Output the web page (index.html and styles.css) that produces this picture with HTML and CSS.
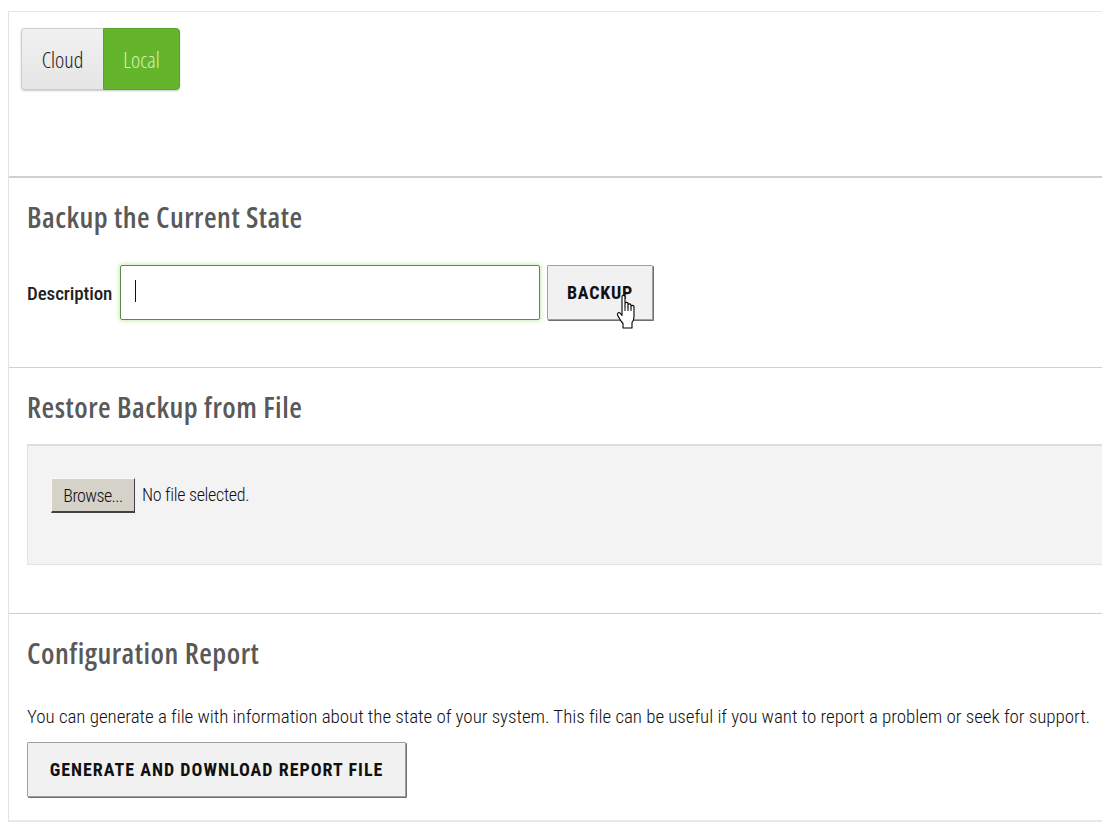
FILE: index.html
```html
<!DOCTYPE html>
<html>
<head>
<meta charset="utf-8">
<link rel="stylesheet" href="styles.css">
</head>
<body>
<div class="page">
  <section class="sec sec-toggle">
    <div class="toggle">
      <span class="tbtn tbtn-off">Cloud</span>
      <span class="tbtn tbtn-on">Local</span>
    </div>
  </section>
  <section class="sec sec-backup">
    <h2 class="title">Backup the Current State</h2>
    <div class="row">
      <label class="label">Description</label>
      <div class="input"><span class="caret"></span></div>
      <div class="btn-wrap">
        <span class="btn btn-backup">BACKUP</span>
        <svg class="hand" width="22" height="36" viewBox="0 0 22 36">
          <path d="M6 2.5 C6 1 9 1 9 2.5 L9 12 L9 9.5 C9 8 12 8 12 9.5 L12 13 L12 11 C12 9.5 15 9.5 15 11 L15 14 L15 12.5 C15 11 18 11 18 12.5 L18 22.5 C18 25.5 17 27.5 16 28.5 L16 34 L7 34 L7 29.5 C5 27.5 3 24 1.5 21 C0.8 19.5 2.5 18 4 19 L6 21.5 Z" fill="#fff" stroke="#000" stroke-width="1.1" stroke-linejoin="round"/>
          <path d="M9 12 L9 17 M12 13 L12 17 M15 14 L15 17" stroke="#000" stroke-width="1"/>
        </svg>
      </div>
    </div>
  </section>
  <section class="sec sec-restore">
    <h2 class="title">Restore Backup from File</h2>
    <div class="filebox">
      <span class="browse">Browse...</span>
      <span class="nofile">No file selected.</span>
    </div>
  </section>
  <section class="sec sec-report">
    <h2 class="title">Configuration Report</h2>
    <p class="desc">You can generate a file with information about the state of your system. This file can be useful if you want to report a problem or seek for support.</p>
    <span class="btn btn-report">GENERATE AND DOWNLOAD REPORT FILE</span>
  </section>
</div>
</body>
</html>
```
FILE: styles.css
```css
html, body {
  margin: 0;
  padding: 0;
  background: #fff;
}
body {
  padding: 11px 0 0 8px;
  font-family: "Roboto", sans-serif;
  font-stretch: condensed;
  color: #222;
}
.page {
  width: 1094px;
  box-sizing: border-box;
  border-left: 1px solid #e2e2e2;
  border-top: 1px solid #e6e6e6;
  border-bottom: 2px solid #e8e8e8;
}
.sec {
  box-sizing: border-box;
  border-bottom: 1px solid #d0d0d0;
  padding-left: 18px;
}
.sec-toggle {
  height: 166px;
  padding-left: 12px;
  padding-top: 16px;
  border-bottom: 2px solid #d0d0d0;
}
.toggle {
  display: inline-flex;
  border-radius: 4px;
  box-shadow: 0 1px 2px rgba(0,0,0,0.22);
}
.tbtn {
  height: 62px;
  box-sizing: border-box;
  display: flex;
  align-items: center;
  justify-content: center;
  font-family: "Open Sans", sans-serif;
  font-stretch: condensed;
  font-weight: 300;
  font-size: 22px;
}
.tbtn-off {
  width: 82px;
  background: linear-gradient(#f1f1f1, #e5e5e5);
  color: #1a1a1a;
  border: 1px solid #cdcdcd;
  border-right: none;
  border-radius: 4px 0 0 4px;
}
.tbtn-on {
  width: 77px;
  background: #64b42c;
  color: #d3f2b4;
  border: 1px solid #58a225;
  border-radius: 0 4px 4px 0;
}
.title {
  margin: 0;
  font-family: "Open Sans", sans-serif;
  font-stretch: condensed;
  font-size: 29px;
  line-height: 36px;
  font-weight: 600;
  color: #595959;
  letter-spacing: 0.5px;
}
.sec-backup {
  height: 190px;
  padding-top: 21px;
}
.row {
  display: flex;
  align-items: flex-start;
  margin-top: 30px;
}
.label {
  font-size: 19px;
  line-height: 22px;
  font-weight: 500;
  color: #222;
  margin-top: 18px;
  width: 93px;
  letter-spacing: -0.1px;
}
.input {
  width: 420px;
  height: 55px;
  box-sizing: border-box;
  border: 1px solid #5d8848;
  border-radius: 2px;
  box-shadow: 0 0 4px 1px #cdeab8;
  position: relative;
}
.caret {
  position: absolute;
  left: 14px;
  top: 14px;
  width: 1px;
  height: 22px;
  background: #111;
}
.btn-wrap {
  position: relative;
  margin-left: 7px;
}
.btn {
  display: inline-flex;
  align-items: center;
  justify-content: center;
  background: #f1f1f1;
  border: 1px solid #a0a0a0;
  border-radius: 1px;
  box-shadow: 1px 1px 0 #6f6f6f;
  font-weight: bold;
  color: #111;
  box-sizing: border-box;
}
.btn-backup {
  width: 106px;
  height: 55px;
  font-size: 18px;
  letter-spacing: 0.8px;
}
.hand {
  position: absolute;
  left: 69px;
  top: 29px;
}
.sec-restore {
  height: 246px;
  padding-top: 21px;
}
.filebox {
  margin-top: 19px;
  height: 121px;
  box-sizing: border-box;
  background: #f3f3f3;
  border-top: 2px solid #dddddd;
  border-left: 1px solid #e4e4e4;
  border-bottom: 1px solid #e2e2e2;
  display: flex;
  align-items: flex-start;
  padding: 32px 0 0 23px;
}
.browse {
  display: inline-flex;
  align-items: center;
  justify-content: center;
  width: 84px;
  height: 35px;
  background: #d5d2ca;
  border-top: 1px solid #fafafa;
  border-left: 1px solid #fafafa;
  border-right: 1px solid #404040;
  border-bottom: 2px solid #404040;
  box-sizing: border-box;
  font-size: 18px;
  font-weight: 300;
  letter-spacing: -0.6px;
  color: #111;
}
.nofile {
  margin-left: 7px;
  margin-top: 6px;
  font-size: 18px;
  line-height: 22px;
  font-weight: 300;
  letter-spacing: -0.3px;
  color: #111;
}
.sec-report {
  height: 206px;
  padding-top: 21px;
  border-bottom: none;
}
.desc {
  margin: 35px 0 0 0;
  font-size: 19px;
  line-height: 22px;
  font-weight: 300;
  color: #111;
  letter-spacing: -0.05px;
  white-space: nowrap;
}
.btn-report {
  margin-top: 14px;
  width: 379px;
  height: 55px;
  font-size: 18px;
  letter-spacing: 1px;
}
```
